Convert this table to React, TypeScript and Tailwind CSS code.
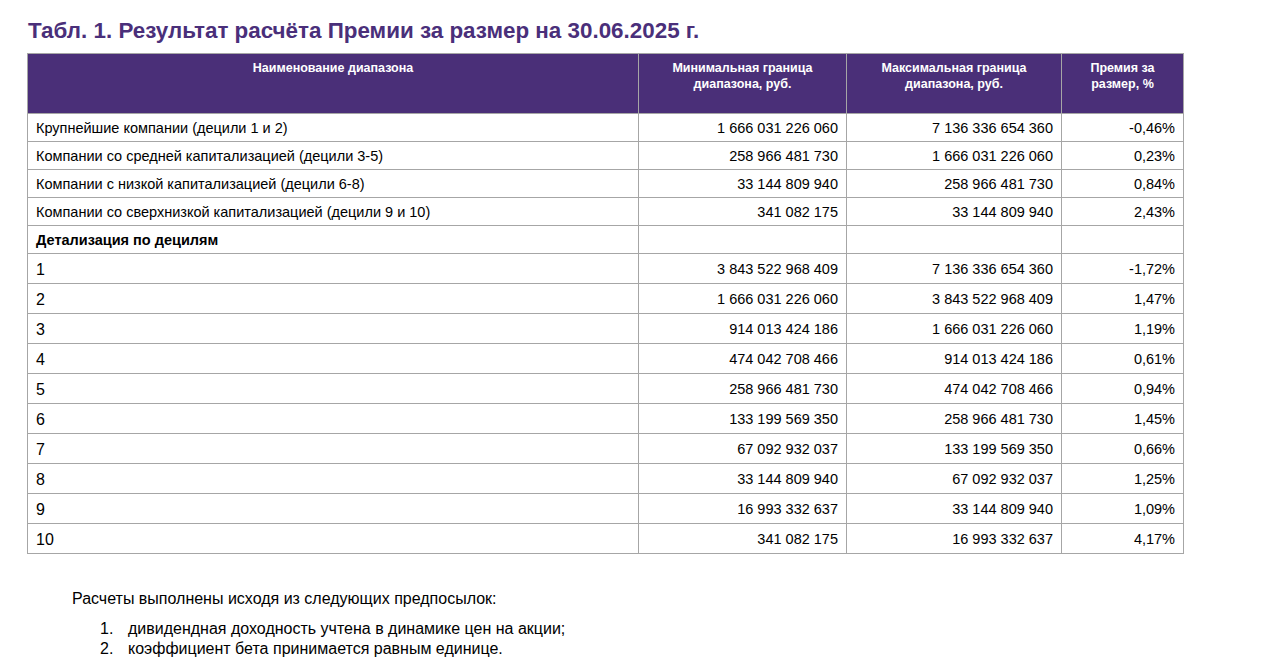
const groups = [
  ['Крупнейшие компании (децили 1 и 2)', '1 666 031 226 060', '7 136 336 654 360', '-0,46%'],
  ['Компании со средней капитализацией (децили 3-5)', '258 966 481 730', '1 666 031 226 060', '0,23%'],
  ['Компании с низкой капитализацией (децили 6-8)', '33 144 809 940', '258 966 481 730', '0,84%'],
  ['Компании со сверхнизкой капитализацией (децили 9 и 10)', '341 082 175', '33 144 809 940', '2,43%'],
]

const deciles = [
  ['1', '3 843 522 968 409', '7 136 336 654 360', '-1,72%'],
  ['2', '1 666 031 226 060', '3 843 522 968 409', '1,47%'],
  ['3', '914 013 424 186', '1 666 031 226 060', '1,19%'],
  ['4', '474 042 708 466', '914 013 424 186', '0,61%'],
  ['5', '258 966 481 730', '474 042 708 466', '0,94%'],
  ['6', '133 199 569 350', '258 966 481 730', '1,45%'],
  ['7', '67 092 932 037', '133 199 569 350', '0,66%'],
  ['8', '33 144 809 940', '67 092 932 037', '1,25%'],
  ['9', '16 993 332 637', '33 144 809 940', '1,09%'],
  ['10', '341 082 175', '16 993 332 637', '4,17%'],
]

export default function App() {
  return (
    <div className="min-h-screen bg-white font-['Liberation_Sans',Arial,sans-serif] text-black">
      <div className="pl-[27px] pt-[18px]">
        <h1 className="pl-px text-[22.4px] font-bold leading-[26px] text-[#4a2f7a]">
          Табл. 1. Результат расчёта Премии за размер на 30.06.2025 г.
        </h1>

        <table className="mt-[9px] w-[1156px] table-fixed border-collapse">
          <colgroup>
            <col className="w-[611px]" />
            <col className="w-[208px]" />
            <col className="w-[215px]" />
            <col className="w-[122px]" />
          </colgroup>
          <thead>
            <tr className="h-[60px] bg-[#4a2f78] text-[12.5px] font-bold leading-4 text-white">
              <th className="border border-[#a6a6a6] px-2 pb-5 pt-[6px] align-top">Наименование диапазона</th>
              <th className="border border-[#a6a6a6] px-2 pb-5 pt-[6px] align-top">
                Минимальная граница
                <br />
                диапазона, руб.
              </th>
              <th className="border border-[#a6a6a6] px-2 pb-5 pt-[6px] align-top">
                Максимальная граница
                <br />
                диапазона, руб.
              </th>
              <th className="border border-[#a6a6a6] px-2 pb-5 pt-[6px] align-top">
                Премия за
                <br />
                размер, %
              </th>
            </tr>
          </thead>
          <tbody className="text-[14.5px] leading-5">
            {groups.map(row => (
              <tr key={row[0]} className="h-[28px]">
                <td className="border border-[#a6a6a6] px-2">{row[0]}</td>
                <td className="border border-[#a6a6a6] px-2 text-right">{row[1]}</td>
                <td className="border border-[#a6a6a6] px-2 text-right">{row[2]}</td>
                <td className="border border-[#a6a6a6] px-2 text-right">{row[3]}</td>
              </tr>
            ))}
            <tr className="h-[28px]">
              <td className="border border-[#a6a6a6] px-2 font-bold">Детализация по децилям</td>
              <td className="border border-[#a6a6a6]" />
              <td className="border border-[#a6a6a6]" />
              <td className="border border-[#a6a6a6]" />
            </tr>
            {deciles.map(row => (
              <tr key={row[0]} className="h-[30px]">
                <td className="border border-[#a6a6a6] px-2 pt-[3px] text-[16px]">{row[0]}</td>
                <td className="border border-[#a6a6a6] px-2 text-right">{row[1]}</td>
                <td className="border border-[#a6a6a6] px-2 text-right">{row[2]}</td>
                <td className="border border-[#a6a6a6] px-2 text-right">{row[3]}</td>
              </tr>
            ))}
          </tbody>
        </table>
      </div>

      {/* Примечания */}
      <div className="pl-[72px] pt-[35px] text-[16px] leading-5">
        <p>Расчеты выполнены исходя из следующих предпосылок:</p>
        <ol className="mt-[10px] pl-[28px]">
          <li className="flex">
            <span className="w-[28px]">1.</span>
            <span>дивидендная доходность учтена в динамике цен на акции;</span>
          </li>
          <li className="flex">
            <span className="w-[28px]">2.</span>
            <span>коэффициент бета принимается равным единице.</span>
          </li>
        </ol>
      </div>
    </div>
  )
}
